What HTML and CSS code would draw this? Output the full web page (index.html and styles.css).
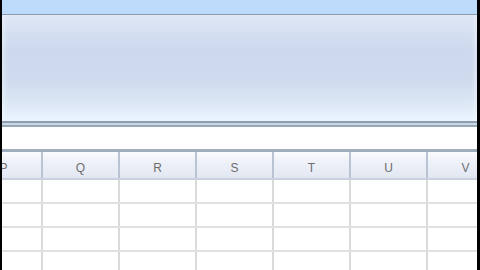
FILE: index.html
```html
<!DOCTYPE html>
<html>
<head>
<meta charset="utf-8">
<link rel="stylesheet" href="styles.css">
</head>
<body>
<div class="screen">
  <div class="topbar"></div>
  <div class="ribbon"></div>
  <div class="ribbon-edge"></div>
  <div class="formula"></div>
  <div class="sheet">
    <div class="row head">
      <div class="cell">P</div><div class="cell">Q</div><div class="cell">R</div><div class="cell">S</div><div class="cell">T</div><div class="cell">U</div><div class="cell">V</div>
    </div>
    <div class="row"><div class="cell"></div><div class="cell"></div><div class="cell"></div><div class="cell"></div><div class="cell"></div><div class="cell"></div><div class="cell"></div></div>
    <div class="row"><div class="cell"></div><div class="cell"></div><div class="cell"></div><div class="cell"></div><div class="cell"></div><div class="cell"></div><div class="cell"></div></div>
    <div class="row"><div class="cell"></div><div class="cell"></div><div class="cell"></div><div class="cell"></div><div class="cell"></div><div class="cell"></div><div class="cell"></div></div>
    <div class="row"><div class="cell"></div><div class="cell"></div><div class="cell"></div><div class="cell"></div><div class="cell"></div><div class="cell"></div><div class="cell"></div></div>
  </div>
</div>
</body>
</html>
```
FILE: styles.css
```css
html, body {
  margin: 0;
  padding: 0;
  background: #000;
  overflow: hidden;
}
.screen {
  width: 475px;
  height: 270px;
  margin-left: 2px;
  background: #fff;
  display: flex;
  flex-direction: column;
  overflow: hidden;
  font-family: "Liberation Sans", Arial, sans-serif;
}
.topbar {
  height: 14px;
  flex: none;
  background: #bcdbfa;
  border-bottom: 1px solid #8a9aae;
}
.ribbon {
  height: 106px;
  flex: none;
  background: linear-gradient(to bottom, #dfe7f5 0%, #d5e0f1 15%, #cbd8ed 35%, #cedbee 60%, #d9e5f3 80%, #e6f1fc 95%, #eaf4fe 100%);
  box-shadow: inset 5px 0 4px -2px rgba(255,255,255,0.35), inset -5px 0 4px -2px rgba(255,255,255,0.35);
}
.ribbon-edge {
  height: 2px;
  flex: none;
  border-top: 2px solid #8e9db0;
  border-bottom: 2px solid #98a7b8;
  background: #c9d6e4;
}
.formula {
  height: 22px;
  flex: none;
  background: #fff;
  border-bottom: 3px solid #9fadbc;
}
.sheet {
  margin-left: -36px;
  display: flex;
  flex-direction: column;
}
.row {
  display: flex;
  height: 22px;
  border-bottom: 2px solid #e0e0e0;
}
.row.head {
  height: 26px;
  background: linear-gradient(to bottom, #fafbfd 0%, #eef1f8 40%, #e2e7f2 100%);
  border-bottom: 2px solid #c9d0e0;
}
.cell {
  flex: none;
  box-sizing: border-box;
  width: 77px;
  border-right: 2px solid #dadada;
  display: flex;
  align-items: center;
  justify-content: center;
  font-size: 12px;
  color: #6e6e6e;
}
.row.head .cell {
  border-right-color: #b9c3d3;
  padding-top: 6px;
}
```
